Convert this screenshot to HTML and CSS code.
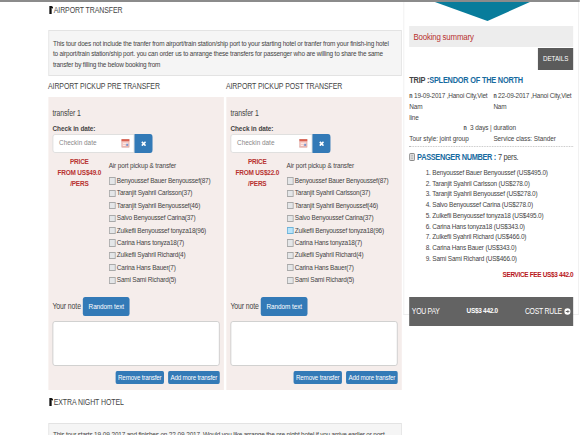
FILE: index.html
```html
<!DOCTYPE html>
<html lang="en">
<head>
<meta charset="utf-8">
<title>Tour booking</title>
<link rel="stylesheet" href="styles.css">
</head>
<body>
<div class="page">
  <main class="main">
    <h2 class="section-title"><i class="mark"></i>AIRPORT TRANSFER</h2>
    <div class="notice">This tour does not include the tranfer from airport/train station/ship port to your starting hotel or tranfer from your finish-ing hotel<br>to airport/train station/ship port. you can order us to anrange these transfers for passenger who are willing to share the same<br>transfer by filling the below booking from</div>
    <div class="columns" id="columns"></div>
    <h2 class="section-title extra"><i class="mark"></i>EXTRA NIGHT HOTEL</h2>
    <div class="notice hotel">This tour starts 19-09-2017 and finishes on 22-09-2017. Would you like arrange the pre night hotel if you arrive earlier or post</div>
  </main>
  <aside class="side">
    <svg class="arrow" viewBox="0 0 122 20" preserveAspectRatio="none"><path d="M0 0H122L67.5 20Z" fill="#087c9b"/></svg>
    <div class="summary-title">Booking summary</div>
    <div class="details">DETAILS</div>
    <div class="trip">TRIP :<b>SPLENDOR OF THE NORTH</b></div>
    <div class="facts">
      <div><b>n</b> 19-09-2017 ,Hanoi City,Viet<br>Nam<br>line</div>
      <div><b>n</b> 22-09-2017 ,Hanoi City,Viet<br>Nam</div>
    </div>
    <div class="duration"><b>n</b>&nbsp; 3 days | duration</div>
    <div class="facts style"><div>Tour style: joint group</div><div>Service class: Stander</div></div>
    <div class="passengers"><svg viewBox="0 0 8 8" preserveAspectRatio="none"><rect x=".5" y=".5" width="7" height="7" rx="1" fill="#ddd" stroke="#777"/><path d="M3 2.5h2M3 4h2M3 5.5h2" stroke="#999" stroke-width=".7"/></svg><b>PASSENGER NUMBER :</b> 7 pers.</div>
    <ol class="people">
      <li>Benyoussef Bauer Benyoussef (US$495.0)</li>
      <li>Taranjit Syahril Carlsson (US$278.0)</li>
      <li>Taranjit Syahril Benyoussef (US$278.0)</li>
      <li>Salvo Benyoussef Carina (US$278.0)</li>
      <li>Zulkefli Benyoussef tonyza18 (US$495.0)</li>
      <li>Carina Hans tonyza18 (US$343.0)</li>
      <li>Zulkefli Syahril Richard (US$466.0)</li>
      <li>Carina Hans Bauer (US$343.0)</li>
      <li>Sami Sami Richard (US$466.0)</li>
    </ol>
    <div class="fee">SERVICE FEE US$3 442.0</div>
    <div class="pay"><span>YOU PAY</span><b>US$3 442.0</b><span class="rule">COST RULE <svg viewBox="0 0 8 8" preserveAspectRatio="none"><circle cx="4" cy="4" r="3.8" fill="#fff"/><path d="M2 4H5.5M4.2 2.5L5.8 4 4.2 5.5" fill="none" stroke="#555" stroke-width="1.1"/></svg></span></div>
  </aside>
</div>
<script src="app.js"></script>
</body>
</html>
```
FILE: app.js
```js
const names = ["Benyoussef Bauer Benyoussef(87)", "Taranjit Syahril Carlsson(37)", "Taranjit Syahril Benyoussef(46)", "Salvo Benyoussef Carina(37)", "Zulkefli Benyoussef tonyza18(96)", "Carina Hans tonyza18(7)", "Zulkefli Syahril Richard(4)", "Carina Hans Bauer(7)", "Sami Sami Richard(5)"];
const transfers = [
  { title: "AIRPORT PICKUP PRE TRANSFER", price: "US$49.0", active: -1 },
  { title: "AIRPORT PICKUP POST TRANSFER", price: "US$22.0", active: 4 }
];
document.getElementById("columns").innerHTML = transfers.map(t => `
  <section class="transfer">
    <h3>${t.title}</h3>
    <div class="panel">
      <div class="name">transfer 1</div>
      <div class="label">Check in date:</div>
      <div class="date"><span class="field">Checkin date<svg viewBox="0 0 10 8" preserveAspectRatio="none"><rect x=".4" y=".4" width="9.2" height="7.2" fill="#f3c5bf" stroke="#d89a94" stroke-width=".8"/><path d="M0 1.2H10" stroke="#d9604f" stroke-width="2"/><path d="M2 4H8M2 6H5" stroke="#fff" stroke-width=".8"/><rect x="6" y="4.5" width="2.4" height="2" fill="#7996cf"/></svg></span><span class="clear"><svg viewBox="0 0 8 8" preserveAspectRatio="none"><path d="M1.2 1.2L6.8 6.8M6.8 1.2L1.2 6.8" stroke="#fff" stroke-width="2.4"/></svg></span></div>
      <div class="options">
        <div class="price">PRICE<br>FROM ${t.price}<br>/PERS</div>
        <div class="list"><p>Air port pickup &amp; transfer</p>${names.map((n, i) => `<div class="row"><i class="${i === t.active ? "box active" : "box"}"></i>${n}</div>`).join("")}</div>
      </div>
      <div class="note">Your note <span class="random">Random text</span></div>
      <div class="area"></div>
      <div class="actions"><span>Remove transfer</span><span>Add more transfer</span></div>
    </div>
  </section>`).join("");
```
FILE: styles.css
```css
* { box-sizing: border-box; }
html, body { margin: 0; overflow: hidden; background: #fff; }
/* The whole page is drawn horizontally condensed. */
.page {
  width: 707.3px; height: 435px; overflow: hidden;
  display: flex; border-top: 2px solid #8b8b8b;
  transform: scaleX(.82); transform-origin: 0 0;
  font: 7.84px/10.8px "Liberation Sans", Arial, sans-serif;
  letter-spacing: -.22px;
  color: #444; white-space: nowrap;
}
body { width: 580px; }
.main { width: 431.7px; margin-left: 58.5px; flex: none; }
h2, h3, p, ol { margin: 0; padding: 0; font-weight: normal; }
.section-title { height: 28px; padding-top: 2px; font-size: 8.5px; line-height: 12px; display: flex; letter-spacing: -.1px; }
.mark { width: 5px; height: 8px; margin: 1.5px 1px 0 1px; border-left: 3px solid #111; border-top: 2px solid #111; border-radius: 0 3px 0 0; }
.notice { height: 46px; padding: 7.5px 5px; background: #f5f5f5; border: 1px solid #e3e3e3; }
.columns { display: flex; gap: 2.4px; }
.transfer { width: 214.65px; }
h3 { height: 21px; font-size: 8.5px; line-height: 21px; letter-spacing: -.1px; }
.panel { height: 293px; background: #f5edeb; padding: 10px 5.5px 0; }
.name { height: 13px; line-height: 13px; font-size: 8.4px; letter-spacing: -.1px; }
.label { height: 14px; line-height: 17px; font-weight: bold; letter-spacing: -.08px; }
.date { display: flex; height: 18.5px; }
.field { width: 100px; display: flex; align-items: center; justify-content: space-between; padding: 0 5px 0 7px; background: #fff; border: 1px solid #ddd; border-radius: 3px 0 0 3px; color: #888; letter-spacing: 0; }
.field svg { width: 10px; height: 8.5px; }
.clear { width: 22px; background: #337ab7; border-radius: 0 3px 3px 0; display: flex; align-items: center; justify-content: center; }
.clear svg { width: 6.5px; height: 5.5px; }
.options { display: flex; height: 144px; }
.price { width: 68.5px; padding: 3px 3px 0 0; line-height: 11px; font-weight: bold; color: #b8322f; text-align: center; }
.list p { height: 22.8px; line-height: 26px; letter-spacing: -.15px; }
.row { display: flex; align-items: center; height: 12.4px; }
.box { width: 8px; height: 7.2px; border: 1px solid #a9a9a9; background: #e4e6e8; margin: -1px 2px 0 0; }
.active { background: #b9e4fa; border-color: #6fb3d8; }
.note { height: 19.5px; display: flex; align-items: center; gap: 2.5px; font-size: 8.4px; letter-spacing: -.1px; }
.random { width: 57px; height: 19.5px; line-height: 19.5px; background: #337ab7; border-radius: 2.5px; color: #fff; text-align: center; font-size: 7.84px; }
.area { height: 44.5px; margin-top: 5px; background: #fff; border: 1px solid #ccc; border-radius: 3px; }
.actions { display: flex; justify-content: flex-end; gap: 5.5px; margin-top: 5.5px; }
.actions span { width: 58.5px; height: 13px; line-height: 13px; text-align: center; background: #337ab7; border-radius: 2px; color: #fff; font-size: 7.6px; }
.actions span + span { width: 62.5px; }
.extra { height: 33px; padding-top: 6px; }
.hotel { padding-top: 5.5px; }
.side { width: 214px; height: 313px; margin-left: 2px; padding: 0 6px; border: 1px solid #eee; border-top: 0; flex: none; }
.arrow { display: block; width: 122px; height: 20px; margin: -1px 0 0 28px; }
.summary-title { height: 21px; line-height: 22px; margin-top: 5px; padding-left: 5px; background: #ededed; color: #b8322f; font-size: 9.6px; }
.details { width: 43px; height: 22px; line-height: 22px; margin: 1px 0 0 auto; background: #5b5b5b; color: #fff; text-align: center; letter-spacing: 0; font-size: 7.6px; }
.trip { margin-top: 4px; height: 13px; line-height: 13px; font-size: 9px; font-weight: bold; letter-spacing: -.27px; }
.trip b, .passengers b { color: #176b9f; }
.facts { display: grid; grid-template-columns: 102.5px 1fr; margin-top: 4px; }
.facts b, .duration b { font-size: 6.5px; }
.duration { text-align: right; padding-right: 70px; letter-spacing: -.1px; }
.style { margin: 0; padding-bottom: 1px; border-bottom: 1px dotted #bbb; letter-spacing: -.08px; }
.passengers { display: flex; align-items: center; gap: 2.5px; height: 14px; margin-top: 3px; font-size: 9px; letter-spacing: -.4px; }
.passengers svg { width: 7px; height: 8px; }
.people { padding-left: 28px; margin-top: 4px; line-height: 10.75px; }
.fee { margin-top: 5px; text-align: right; font-weight: bold; color: #b8161b; letter-spacing: -.4px; }
.pay { height: 29px; margin-top: 16px; padding: 0 3px; background: #636363; color: #fff; display: flex; align-items: center; justify-content: space-between; font-size: 8.4px; letter-spacing: -.3px; }
.pay b { font-size: 7.84px; }
.rule { display: flex; align-items: center; gap: 3px; }
.rule svg { width: 8px; height: 7px; }
```
